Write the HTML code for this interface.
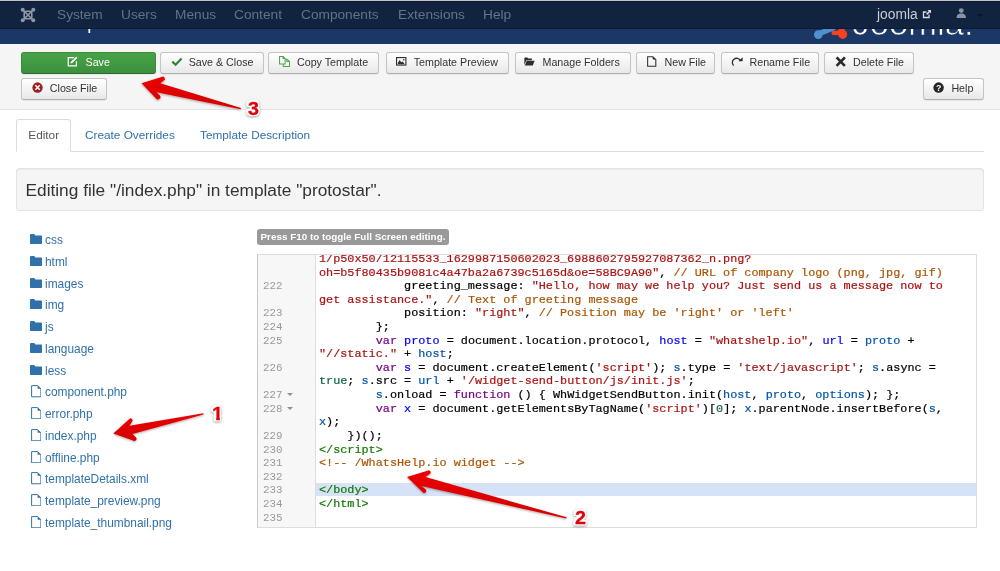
<!DOCTYPE html>
<html lang="en">
<head>
<meta charset="utf-8">
<title>Templates: Customise</title>
<style>
*{box-sizing:border-box;margin:0;padding:0}
html,body{width:1000px;height:571px;overflow:hidden;background:#fff}
body{position:relative;will-change:transform;font-family:"Liberation Sans",Arial,sans-serif;font-size:11px;color:#333}
.abs{position:absolute}
#nav{left:0;top:0;width:1000px;height:29px;background:#12233f;border-top:1px solid #c6c2c5;border-bottom:1px solid #0d1a31;box-shadow:inset 0 1px 0 #0c1b35;z-index:3}
#nav span{position:absolute;top:6px;font-size:13.7px;line-height:16px;color:#66728a;white-space:nowrap}
#nav span.w{color:#c9cdd5}
#hdr{left:0;top:29px;width:1000px;height:15px;background:#1b3766;overflow:hidden;z-index:2}
#sub{left:0;top:44px;width:1000px;height:66px;background:#f5f5f5;border-bottom:1px solid #e3e3e3}
.btn{position:absolute;height:22px;border:1px solid #c4c4c4;border-bottom-color:#b0b0b0;border-radius:3px;background:linear-gradient(#ffffff,#e8e8e8);box-shadow:0 1px 1px rgba(0,0,0,.06);font-size:10.7px;line-height:20px;color:#333;white-space:nowrap}
.btn b{position:absolute;top:-1px;font-weight:normal}
.btn svg{position:absolute}
.btn.g{background:linear-gradient(#47a447,#3c8f3c);border-color:#3b8b3b #3b8b3b #2d6a2d;color:#fff}
.tab{position:absolute;top:122px;font-size:11.8px;line-height:27px;color:#3071a9;white-space:nowrap}
#well{left:16px;top:168px;width:968px;height:43px;background:#f5f5f5;border:1px solid #e3e3e3;border-radius:3px;box-shadow:inset 0 1px 1px rgba(0,0,0,.04)}
#well span{position:absolute;left:8.5px;top:11px;font-size:17.3px;line-height:20px;color:#333;white-space:nowrap}
.tree{position:absolute;left:30px;font-size:11.9px;line-height:14px;color:#3071a9;white-space:nowrap}
.tree svg{position:absolute;left:0;top:1px}
.tree span{position:absolute;left:15px;top:0}
#badge{left:257px;top:229px;width:192px;height:16px;background:#999;border-radius:3px;color:#fff;font-weight:bold;font-size:9.9px;line-height:16px;padding-left:3.5px;white-space:nowrap}
#ed{left:257px;top:254px;width:720px;height:274px;border:1px solid #ddd;border-left-color:#c9c9c9;background:#fff;overflow:hidden}
#gut{left:0;top:0;width:58px;height:272px;background:#f7f7f7;border-right:1px solid #ddd}
#hl{left:58px;top:228px;width:660px;height:13.4px;background:#d6e3f7}
pre{position:absolute;font-family:"Liberation Mono","Courier New",monospace;font-size:11.82px;line-height:13.61px;white-space:pre}
#ln{left:5px;top:-2px;color:#999;font-size:10.8px}
#code{left:61px;top:-2px;color:#000;-webkit-text-stroke:0.2px}
#ln i{display:inline-block;width:0;height:0;border-left:3px solid transparent;border-right:3px solid transparent;border-top:3.4px solid #8f8f8f;margin-left:4.6px;vertical-align:2px}
.num{position:absolute;z-index:6;font-weight:bold;font-size:18.3px;line-height:20px;height:20px;color:#e00008;transform-origin:0 0;transform:scaleX(1.08);filter:drop-shadow(1.4px 0 0 #fff) drop-shadow(-1.4px 0 0 #fff) drop-shadow(0 1.4px 0 #fff) drop-shadow(0 -1.4px 0 #fff) drop-shadow(0 1.2px .9px rgba(0,0,0,.38))}
.num span{display:block;-webkit-text-stroke:.3px #e00008}
.num .one{clip-path:polygon(0 0,100% 0,100% 14.3px,7.2px 14.3px,7.2px 100%,3.9px 100%,3.9px 14.3px,0 14.3px)}
.s{color:#a11}.c{color:#a50}.k{color:#708}.d{color:#00f}.v{color:#05a}.t{color:#170}.n{color:#164}
</style>
</head>
<body>
<div id="nav" class="abs">
<svg class="abs" style="left:20.2px;top:5.6px" width="16" height="16" viewBox="0 0 16 16"><g fill="none" stroke="#8d97a8" stroke-width="1.6"><path d="M3 3 L13 13 M13 3 L3 13"/><rect x="4.2" y="4.2" width="7.6" height="7.6" rx="2.4"/></g><g fill="#8d97a8"><circle cx="2.7" cy="2.7" r="2"/><circle cx="13.3" cy="2.7" r="2"/><circle cx="2.7" cy="13.3" r="2"/><circle cx="13.3" cy="13.3" r="2"/></g></svg>
<span style="left:57px">System</span><span style="left:121px">Users</span><span style="left:175px">Menus</span><span style="left:234px">Content</span><span style="left:301px">Components</span><span style="left:398px">Extensions</span><span style="left:483px">Help</span>
<span class="w" style="left:877px;top:6px;font-size:13.8px">joomla</span>
<svg class="abs" style="left:922px;top:8px" width="10" height="10" viewBox="0 0 10 10"><path d="M7 5.5V8.5H1.5V3H4.5" fill="none" stroke="#d9dde3" stroke-width="1.3"/><path d="M5.5 1H9V4.5L7.8 3.3 5.2 5.9 4.1 4.8 6.7 2.2Z" fill="#d9dde3"/></svg>
<svg class="abs" style="left:956px;top:7px" width="10.5" height="10" viewBox="0 0 10 10"><circle cx="5" cy="2.6" r="2.4" fill="#8a93a3"/><path d="M0.3 10C0.3 6.5 2.5 5.6 5 5.6S9.7 6.5 9.7 10Z" fill="#8a93a3"/></svg>
<svg class="abs" style="left:977px;top:12.5px" width="6" height="3.2" viewBox="0 0 8 4"><path d="M0 0H8L4 4Z" fill="#0a1628"/></svg>
</div>
<div id="hdr" class="abs">
<span class="abs" style="left:52.3px;top:-20.8px;font-size:18.5px;line-height:30px;color:#fff;white-space:nowrap">Templates: Customise</span>
<svg class="abs" style="left:808px;top:-10px" width="180" height="25" viewBox="808 19 180 25"><g fill="#5091cd" stroke="#5091cd" stroke-linecap="round"><circle cx="818.3" cy="34.6" r="4.3" stroke="none"/><path d="M819.5 33.6 L833 28" stroke-width="5.4" fill="none"/></g><g fill="#f44321" stroke="#f44321" stroke-linecap="round"><circle cx="842.7" cy="34.4" r="4.5" stroke="none"/><path d="M842 32.6 L833.6 33" stroke-width="4.4" fill="none"/><path d="M841.6 33 L841.6 27" stroke-width="6" fill="none"/></g><text x="852.5" y="35" font-family="Liberation Sans, sans-serif" font-size="34" fill="#fff" stroke="#1b3766" stroke-width=".7" textLength="121" lengthAdjust="spacingAndGlyphs">Joomla!</text></svg>
</div>
<div id="sub" class="abs"></div>

<div class="btn g" style="left:21px;top:52px;width:134.5px"><svg style="left:45.4px;top:3.3px" width="11.3" height="11" viewBox="0 0 12 12" preserveAspectRatio="none"><path d="M7.2 1.8H1.3V10.7H10V5.6" fill="none" stroke="#fff" stroke-width="1.3"/><path d="M4.2 6.4 9.6.9 11 2.3 5.6 7.7 3.7 8.2Z" fill="#fff"/></svg><b style="left:63.5px">Save</b></div>
<div class="btn" style="left:160px;top:52px;width:103.8px"><svg style="left:10.3px;top:4.3px" width="12" height="10" viewBox="0 0 12 10"><path d="M1.3 4.6 4.6 7.7 10.6 1.4" fill="none" stroke="#2f8433" stroke-width="2.2"/></svg><b style="left:27.7px">Save &amp; Close</b></div>
<div class="btn" style="left:268.2px;top:52px;width:111.3px"><svg style="left:10px;top:3px" width="12" height="12" viewBox="0 0 13 13"><g fill="none" stroke="#51a351" stroke-width="1.1"><path d="M.6.6H4.6L6.6 2.6V8.6H.6Z"/><path d="M6.8 3.4H8.6L11.4 6V11.4H4.6V8.8"/><path d="M4.4.8V2.8H6.4M8.4 3.6V6H11.2"/></g></svg><b style="left:27.8px">Copy Template</b></div>
<div class="btn" style="left:385.5px;top:52px;width:123.8px"><svg style="left:9.3px;top:4px" width="11" height="9.2" viewBox="0 0 12 10"><rect x=".6" y=".6" width="10.2" height="8.2" fill="none" stroke="#2d2d2d" stroke-width="1.2"/><path d="M2 8V6.5L4 3.2 5.6 5.8 7.2 4.8 9 7V8Z" fill="#2d2d2d"/><circle cx="8.4" cy="3" r=".9" fill="#2d2d2d"/></svg><b style="left:27.2px">Template Preview</b></div>
<div class="btn" style="left:514.5px;top:52px;width:116.8px"><svg style="left:8.6px;top:4px" width="11" height="9.2" viewBox="0 0 12 10"><path d="M.4 8.6V1.2C.4.7.7.4 1.2.4H3.6L4.6 1.6H8.6V3.4H2.6L.4 8.6Z" fill="#2d2d2d"/><path d="M3 4.2H11.6L9.6 9.3H.9Z" fill="#2d2d2d"/></svg><b style="left:27.0px">Manage Folders</b></div>
<div class="btn" style="left:636.2px;top:52px;width:79.3px"><svg style="left:10px;top:3px" width="10" height="11.2" viewBox="0 0 11 12"><path d="M.7.7H6.3L9.7 3.8V11.1H.7Z" fill="none" stroke="#2d2d2d" stroke-width="1.15"/><path d="M6.3.7V3.8H9.7Z" fill="#2d2d2d"/></svg><b style="left:27.3px">New File</b></div>
<div class="btn" style="left:721.2px;top:52px;width:98.1px"><svg style="left:9px;top:3px" width="13" height="12" viewBox="0 0 13 12"><path d="M2.6 9.6A4.3 4.3 0 1 1 9.3 4.3" fill="none" stroke="#2d2d2d" stroke-width="1.3"/><path d="M11.6 1.2V5.2H7.4Z" fill="#2d2d2d"/></svg><b style="left:27.3px">Rename File</b></div>
<div class="btn" style="left:824.4px;top:52px;width:89.2px"><svg style="left:9.6px;top:3px" width="11.3" height="11.3" viewBox="0 0 12 12"><path d="M2.6 2.4 9.6 9.6M9.6 2.4 2.6 9.6" fill="none" stroke="#2a2a2a" stroke-width="2.7" stroke-linecap="square"/></svg><b style="left:27.6px">Delete File</b></div>
<div class="btn" style="left:21px;top:78px;width:86.0px"><svg style="left:9.9px;top:3.4px" width="11.1" height="11.1" viewBox="0 0 12 12"><circle cx="6" cy="6" r="5.6" fill="#9d1f1f"/><path d="M3.6 3.6 8.4 8.4M8.4 3.6 3.6 8.4" stroke="#fff" stroke-width="1.6"/></svg><b style="left:27.8px">Close File</b></div>
<div class="btn" style="left:923px;top:78px;width:60.5px"><svg style="left:9.3px;top:3.4px" width="11.2" height="11.2" viewBox="0 0 12 12"><circle cx="6" cy="6" r="5.6" fill="#262626"/><text x="6" y="9.3" text-anchor="middle" font-family="Liberation Sans, sans-serif" font-weight="bold" font-size="9.5" fill="#fff">?</text></svg><b style="left:27.4px">Help</b></div>

<div class="abs" style="left:16px;top:151px;width:968px;height:1px;background:#ddd"></div>
<div class="abs" style="left:16px;top:119px;width:55px;height:33px;border:1px solid #ddd;border-bottom-color:#fff;border-radius:3px 3px 0 0;background:#fff"></div>
<div class="tab" style="left:28.3px;color:#555">Editor</div>
<div class="tab" style="left:85px">Create Overrides</div>
<div class="tab" style="left:200px">Template Description</div>

<div id="well" class="abs"><span>Editing file "/index.php" in template "protostar".</span></div>

<div class="tree" style="top:233.00px"><svg width="12" height="10" viewBox="0 0 12 10"><path d="M0 1.2C0 .5.5 0 1.2 0H4.2L5.4 1.4H11C11.6 1.4 12 1.8 12 2.4V9C12 9.6 11.6 10 11 10H1C.4 10 0 9.6 0 9Z" fill="#3071a9"/></svg><span>css</span></div>
<div class="tree" style="top:254.75px"><svg width="12" height="10" viewBox="0 0 12 10"><path d="M0 1.2C0 .5.5 0 1.2 0H4.2L5.4 1.4H11C11.6 1.4 12 1.8 12 2.4V9C12 9.6 11.6 10 11 10H1C.4 10 0 9.6 0 9Z" fill="#3071a9"/></svg><span>html</span></div>
<div class="tree" style="top:276.50px"><svg width="12" height="10" viewBox="0 0 12 10"><path d="M0 1.2C0 .5.5 0 1.2 0H4.2L5.4 1.4H11C11.6 1.4 12 1.8 12 2.4V9C12 9.6 11.6 10 11 10H1C.4 10 0 9.6 0 9Z" fill="#3071a9"/></svg><span>images</span></div>
<div class="tree" style="top:298.25px"><svg width="12" height="10" viewBox="0 0 12 10"><path d="M0 1.2C0 .5.5 0 1.2 0H4.2L5.4 1.4H11C11.6 1.4 12 1.8 12 2.4V9C12 9.6 11.6 10 11 10H1C.4 10 0 9.6 0 9Z" fill="#3071a9"/></svg><span>img</span></div>
<div class="tree" style="top:320.00px"><svg width="12" height="10" viewBox="0 0 12 10"><path d="M0 1.2C0 .5.5 0 1.2 0H4.2L5.4 1.4H11C11.6 1.4 12 1.8 12 2.4V9C12 9.6 11.6 10 11 10H1C.4 10 0 9.6 0 9Z" fill="#3071a9"/></svg><span>js</span></div>
<div class="tree" style="top:341.75px"><svg width="12" height="10" viewBox="0 0 12 10"><path d="M0 1.2C0 .5.5 0 1.2 0H4.2L5.4 1.4H11C11.6 1.4 12 1.8 12 2.4V9C12 9.6 11.6 10 11 10H1C.4 10 0 9.6 0 9Z" fill="#3071a9"/></svg><span>language</span></div>
<div class="tree" style="top:363.50px"><svg width="12" height="10" viewBox="0 0 12 10"><path d="M0 1.2C0 .5.5 0 1.2 0H4.2L5.4 1.4H11C11.6 1.4 12 1.8 12 2.4V9C12 9.6 11.6 10 11 10H1C.4 10 0 9.6 0 9Z" fill="#3071a9"/></svg><span>less</span></div>
<div class="tree" style="top:385.25px"><svg style="top:0px;left:0.5px" width="10.5" height="12.4" viewBox="0 0 10.5 12.4"><path d="M.6.6H6.6L9.9 3.7V11.8H.6Z" fill="#fff" stroke="#3071a9" stroke-width="1"/><path d="M6.6.6V3.7H9.9Z" fill="#3071a9"/></svg><span>component.php</span></div>
<div class="tree" style="top:407.00px"><svg style="top:0px;left:0.5px" width="10.5" height="12.4" viewBox="0 0 10.5 12.4"><path d="M.6.6H6.6L9.9 3.7V11.8H.6Z" fill="#fff" stroke="#3071a9" stroke-width="1"/><path d="M6.6.6V3.7H9.9Z" fill="#3071a9"/></svg><span>error.php</span></div>
<div class="tree" style="top:428.75px"><svg style="top:0px;left:0.5px" width="10.5" height="12.4" viewBox="0 0 10.5 12.4"><path d="M.6.6H6.6L9.9 3.7V11.8H.6Z" fill="#fff" stroke="#3071a9" stroke-width="1"/><path d="M6.6.6V3.7H9.9Z" fill="#3071a9"/></svg><span>index.php</span></div>
<div class="tree" style="top:450.50px"><svg style="top:0px;left:0.5px" width="10.5" height="12.4" viewBox="0 0 10.5 12.4"><path d="M.6.6H6.6L9.9 3.7V11.8H.6Z" fill="#fff" stroke="#3071a9" stroke-width="1"/><path d="M6.6.6V3.7H9.9Z" fill="#3071a9"/></svg><span>offline.php</span></div>
<div class="tree" style="top:472.25px"><svg style="top:0px;left:0.5px" width="10.5" height="12.4" viewBox="0 0 10.5 12.4"><path d="M.6.6H6.6L9.9 3.7V11.8H.6Z" fill="#fff" stroke="#3071a9" stroke-width="1"/><path d="M6.6.6V3.7H9.9Z" fill="#3071a9"/></svg><span>templateDetails.xml</span></div>
<div class="tree" style="top:494.00px"><svg style="top:0px;left:0.5px" width="10.5" height="12.4" viewBox="0 0 10.5 12.4"><path d="M.6.6H6.6L9.9 3.7V11.8H.6Z" fill="#fff" stroke="#3071a9" stroke-width="1"/><path d="M6.6.6V3.7H9.9Z" fill="#3071a9"/></svg><span>template_preview.png</span></div>
<div class="tree" style="top:515.75px"><svg style="top:0px;left:0.5px" width="10.5" height="12.4" viewBox="0 0 10.5 12.4"><path d="M.6.6H6.6L9.9 3.7V11.8H.6Z" fill="#fff" stroke="#3071a9" stroke-width="1"/><path d="M6.6.6V3.7H9.9Z" fill="#3071a9"/></svg><span>template_thumbnail.png</span></div>

<div id="badge" class="abs">Press F10 to toggle Full Screen editing.</div>
<div id="ed" class="abs">
<div id="gut" class="abs"></div>
<div id="hl" class="abs"></div>
<pre id="ln">


222

223
224
225

226

227<i></i>
228<i></i>

229
230
231
232
233
234
235</pre>
<pre id="code"><span class="s">1/p50x50/12115533_1629987150602023_6988602795927087362_n.png?</span>
<span class="s">oh=b5f80435b9081c4a47ba2a6739c5165d&amp;oe=58BC9A90"</span>, <span class="c">// URL of company logo (png, jpg, gif)</span>
            greeting_message: <span class="s">"Hello, how may we help you? Just send us a message now to</span>
<span class="s">get assistance."</span>, <span class="c">// Text of greeting message</span>
            position: <span class="s">"right"</span>, <span class="c">// Position may be 'right' or 'left'</span>
        };
        <span class="k">var</span> <span class="d">proto</span> = document.location.protocol, <span class="d">host</span> = <span class="s">"whatshelp.io"</span>, <span class="d">url</span> = <span class="v">proto</span> +
<span class="s">"//static."</span> + <span class="v">host</span>;
        <span class="k">var</span> <span class="d">s</span> = document.createElement(<span class="s">'script'</span>); <span class="v">s</span>.type = <span class="s">'text/javascript'</span>; <span class="v">s</span>.async =
<span class="n">true</span>; <span class="v">s</span>.src = <span class="v">url</span> + <span class="s">'/widget-send-button/js/init.js'</span>;
        <span class="v">s</span>.onload = <span class="k">function</span> () { WhWidgetSendButton.init(<span class="v">host</span>, <span class="v">proto</span>, <span class="v">options</span>); };
        <span class="k">var</span> <span class="d">x</span> = document.getElementsByTagName(<span class="s">'script'</span>)[<span class="n">0</span>]; <span class="v">x</span>.parentNode.insertBefore(<span class="v">s</span>,
<span class="v">x</span>);
    })();
<span class="t">&lt;/script&gt;</span>
<span class="c">&lt;!-- /WhatsHelp.io widget --&gt;</span>

<span class="t">&lt;/body&gt;</span>
<span class="t">&lt;/html&gt;</span>
</pre>
</div>

<svg class="abs" style="left:0;top:0;z-index:5" width="1000" height="571" viewBox="0 0 1000 571">
<defs><filter id="sh" x="-20%" y="-20%" width="140%" height="150%"><feDropShadow dx="0" dy="1" stdDeviation="0.8" flood-color="#000" flood-opacity=".35"/></filter>
<linearGradient id="rg" x1="0" y1="0" x2="0" y2="1"><stop offset="0" stop-color="#ea0206"/><stop offset="1" stop-color="#d40002"/></linearGradient></defs>
<g fill="url(#rg)" filter="url(#sh)">
<path d="M141.5 83.2 L161.6 77 A1.9 1.9 0 0 1 163.9 80.6 L160.3 83.2 L241 107.9 L240.6 109.2 L156.5 92.3 L160 95.5 A1.9 1.9 0 0 1 155.8 98.2 Z"/>
<path d="M113.3 433.5 L129.4 418.9 A1.9 1.9 0 0 1 132.5 420.9 L129.4 425.8 L203.5 413.2 L203.5 414.5 L132.5 434.1 L136.1 437.4 A2.2 2.2 0 0 1 133 440.5 Z"/>
<path d="M407 477 L427.5 470.8 A1.9 1.9 0 0 1 429.8 474 L425.5 477 L566.6 517.3 L566.1 518.6 L421.5 486 L425.8 489.5 A1.9 1.9 0 0 1 422.5 492 Z"/>
</g>
</svg>
<div class="num" style="left:248.2px;top:98.5px"><span>3</span></div>
<div class="num" style="left:211.5px;top:403.5px"><span class="one">1</span></div>
<div class="num" style="left:575.2px;top:507.5px"><span>2</span></div>
</body>
</html>
